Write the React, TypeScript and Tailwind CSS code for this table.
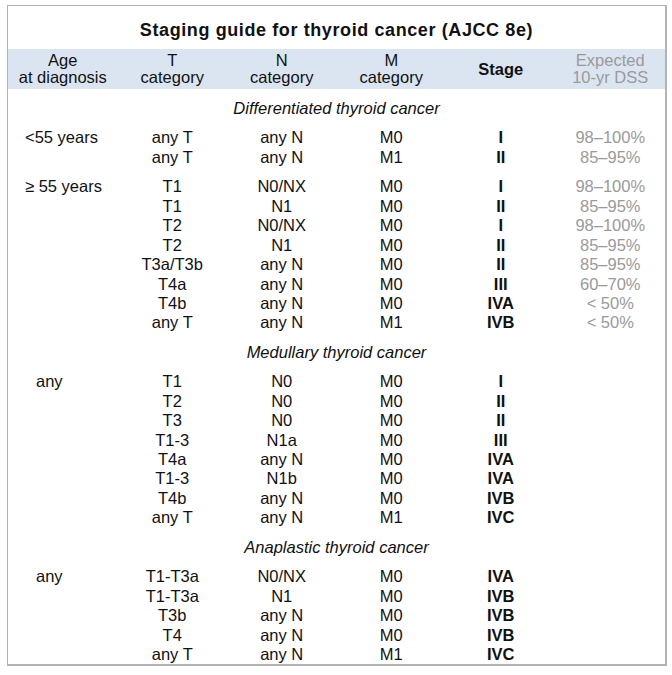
const font = { fontFamily: '"Liberation Sans", Arial, sans-serif' };

type Row = [string, string, string, string, string?];

const sections: { title: string; groups: { age: string; agePad: string; rows: Row[] }[] }[] = [
  {
    title: "Differentiated thyroid cancer",
    groups: [
      {
        age: "<55 years",
        agePad: "pl-[17px]",
        rows: [
          ["any T", "any N", "M0", "I", "98–100%"],
          ["any T", "any N", "M1", "II", "85–95%"],
        ],
      },
      {
        age: "≥ 55 years",
        agePad: "pl-[17px]",
        rows: [
          ["T1", "N0/NX", "M0", "I", "98–100%"],
          ["T1", "N1", "M0", "II", "85–95%"],
          ["T2", "N0/NX", "M0", "I", "98–100%"],
          ["T2", "N1", "M0", "II", "85–95%"],
          ["T3a/T3b", "any N", "M0", "II", "85–95%"],
          ["T4a", "any N", "M0", "III", "60–70%"],
          ["T4b", "any N", "M0", "IVA", "< 50%"],
          ["any T", "any N", "M1", "IVB", "< 50%"],
        ],
      },
    ],
  },
  {
    title: "Medullary thyroid cancer",
    groups: [
      {
        age: "any",
        agePad: "pl-[28px]",
        rows: [
          ["T1", "N0", "M0", "I"],
          ["T2", "N0", "M0", "II"],
          ["T3", "N0", "M0", "II"],
          ["T1-3", "N1a", "M0", "III"],
          ["T4a", "any N", "M0", "IVA"],
          ["T1-3", "N1b", "M0", "IVA"],
          ["T4b", "any N", "M0", "IVB"],
          ["any T", "any N", "M1", "IVC"],
        ],
      },
    ],
  },
  {
    title: "Anaplastic thyroid cancer",
    groups: [
      {
        age: "any",
        agePad: "pl-[28px]",
        rows: [
          ["T1-T3a", "N0/NX", "M0", "IVA"],
          ["T1-T3a", "N1", "M0", "IVB"],
          ["T3b", "any N", "M0", "IVB"],
          ["T4", "any N", "M0", "IVB"],
          ["any T", "any N", "M1", "IVC"],
        ],
      },
    ],
  },
];

function Group({ age, agePad, rows }: { age: string; agePad: string; rows: Row[] }) {
  return (
    <div className="mt-[10px]">
      {rows.map(([t, n, m, stage, dss], i) => (
        <div key={i} className="grid grid-cols-6 text-[16.5px] leading-[19.43px] text-[#111]">
          <div className={agePad}>{i === 0 ? age : ""}</div>
          <div className="text-center">{t}</div>
          <div className="text-center">{n}</div>
          <div className="text-center">{m}</div>
          <div className="text-center font-bold">{stage}</div>
          <div className="text-center text-[#9a9a9a]">{dss ?? ""}</div>
        </div>
      ))}
    </div>
  );
}

export default function App() {
  return (
    <div className="h-[675px] w-[672px] bg-white pl-[7px] pt-[5px]" style={font}>
      <div className="w-[660px] border-t border-l border-r-2 border-b-2 border-[#b3b3b3]">
        <h1 className="pt-[5px] text-center text-[18px] font-bold leading-[38px] tracking-[0.6px] text-[#111]">
          Staging guide for thyroid cancer (AJCC 8e)
        </h1>

        <div className="grid h-[40px] grid-cols-6 items-center bg-[#dbe5f1] text-center text-[16.5px] leading-[17px] text-[#111]">
          <div>Age<br />at diagnosis</div>
          <div>T<br />category</div>
          <div>N<br />category</div>
          <div>M<br />category</div>
          <div className="font-bold">Stage</div>
          <div className="text-[#9a9a9a]">Expected<br />10-yr DSS</div>
        </div>

        <div className="pt-[10px]">
          {sections.map((s, si) => (
            <div key={s.title} className={si > 0 ? "mt-[10px]" : ""}>
              <div className="text-center text-[16.5px] italic leading-[19.43px] text-[#111]">{s.title}</div>
              {s.groups.map((g) => (
                <Group key={g.age} {...g} />
              ))}
            </div>
          ))}
        </div>
      </div>
    </div>
  );
}
